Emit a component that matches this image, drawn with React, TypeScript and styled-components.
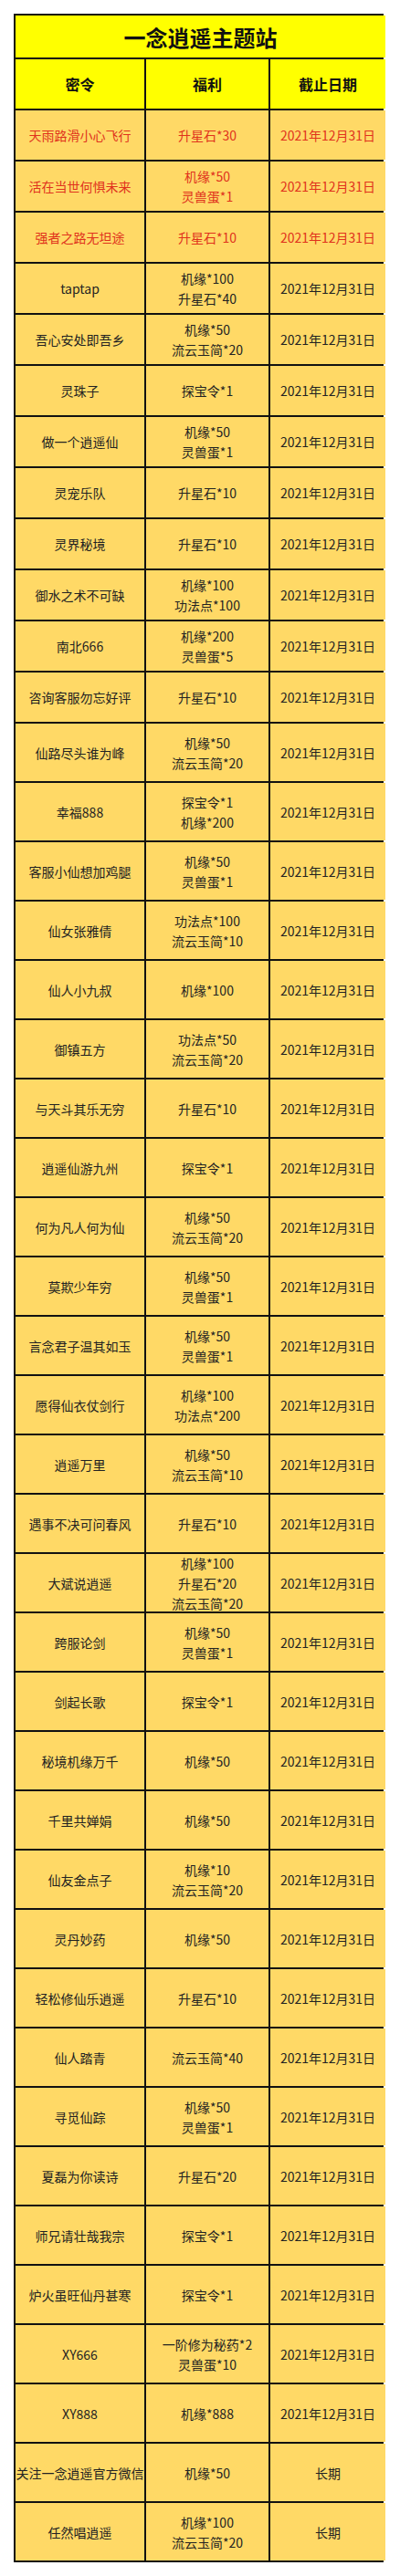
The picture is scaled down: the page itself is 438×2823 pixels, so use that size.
import { FC } from 'react';
import styled, { createGlobalStyle, css } from 'styled-components';

const GlobalStyle = createGlobalStyle`
	html, body {
		margin: 0;
		padding: 0;
		background: #fff;
	}
	body {
		font-family: 'Noto Sans CJK SC', 'Noto Sans', sans-serif;
	}
`;

interface ICode {
	code: string;
	rewards: string[];
	deadline?: string;
	red?: boolean;
}

const DATE = '2021年12月31日';

const codes: ICode[] = [
	{ code: '天雨路滑小心飞行', rewards: ['升星石*30'], red: true },
	{ code: '活在当世何惧未来', rewards: ['机缘*50', '灵兽蛋*1'], red: true },
	{ code: '强者之路无坦途', rewards: ['升星石*10'], red: true },
	{ code: 'taptap', rewards: ['机缘*100', '升星石*40'] },
	{ code: '吾心安处即吾乡', rewards: ['机缘*50', '流云玉简*20'] },
	{ code: '灵珠子', rewards: ['探宝令*1'] },
	{ code: '做一个逍遥仙', rewards: ['机缘*50', '灵兽蛋*1'] },
	{ code: '灵宠乐队', rewards: ['升星石*10'] },
	{ code: '灵界秘境', rewards: ['升星石*10'] },
	{ code: '御水之术不可缺', rewards: ['机缘*100', '功法点*100'] },
	{ code: '南北666', rewards: ['机缘*200', '灵兽蛋*5'] },
	{ code: '咨询客服勿忘好评', rewards: ['升星石*10'] },
	{ code: '仙路尽头谁为峰', rewards: ['机缘*50', '流云玉简*20'] },
	{ code: '幸福888', rewards: ['探宝令*1', '机缘*200'] },
	{ code: '客服小仙想加鸡腿', rewards: ['机缘*50', '灵兽蛋*1'] },
	{ code: '仙女张雅倩', rewards: ['功法点*100', '流云玉简*10'] },
	{ code: '仙人小九叔', rewards: ['机缘*100'] },
	{ code: '御镇五方', rewards: ['功法点*50', '流云玉简*20'] },
	{ code: '与天斗其乐无穷', rewards: ['升星石*10'] },
	{ code: '逍遥仙游九州', rewards: ['探宝令*1'] },
	{ code: '何为凡人何为仙', rewards: ['机缘*50', '流云玉简*20'] },
	{ code: '莫欺少年穷', rewards: ['机缘*50', '灵兽蛋*1'] },
	{ code: '言念君子温其如玉', rewards: ['机缘*50', '灵兽蛋*1'] },
	{ code: '愿得仙衣仗剑行', rewards: ['机缘*100', '功法点*200'] },
	{ code: '逍遥万里', rewards: ['机缘*50', '流云玉简*10'] },
	{ code: '遇事不决可问春风', rewards: ['升星石*10'] },
	{ code: '大斌说逍遥', rewards: ['机缘*100', '升星石*20', '流云玉简*20'] },
	{ code: '跨服论剑', rewards: ['机缘*50', '灵兽蛋*1'] },
	{ code: '剑起长歌', rewards: ['探宝令*1'] },
	{ code: '秘境机缘万千', rewards: ['机缘*50'] },
	{ code: '千里共婵娟', rewards: ['机缘*50'] },
	{ code: '仙友金点子', rewards: ['机缘*10', '流云玉简*20'] },
	{ code: '灵丹妙药', rewards: ['机缘*50'] },
	{ code: '轻松修仙乐逍遥', rewards: ['升星石*10'] },
	{ code: '仙人踏青', rewards: ['流云玉简*40'] },
	{ code: '寻觅仙踪', rewards: ['机缘*50', '灵兽蛋*1'] },
	{ code: '夏磊为你读诗', rewards: ['升星石*20'] },
	{ code: '师兄请壮哉我宗', rewards: ['探宝令*1'] },
	{ code: '炉火虽旺仙丹甚寒', rewards: ['探宝令*1'] },
	{ code: 'XY666', rewards: ['一阶修为秘药*2', '灵兽蛋*10'] },
	{ code: 'XY888', rewards: ['机缘*888'] },
	{ code: '关注一念逍遥官方微信', rewards: ['机缘*50'], deadline: '长期' },
	{ code: '任然唱逍遥', rewards: ['机缘*100', '流云玉简*20'], deadline: '长期' },
];

// first rows are shorter than the rest in the original sheet
const SHORT_ROWS = 12;

const Page = styled.div`
	padding: 15px 14px 15px 15px;
`;

const Table = styled.div`
	display: grid;
	grid-template-columns: 141px 134px 126px;
	gap: 2px;
	width: 401px;
	border: 2px solid #111;
	background: #111;
`;

const Title = styled.div`
	grid-column: 1 / -1;
	display: flex;
	align-items: center;
	justify-content: center;
	height: 46px;
	background: #ffff00;
	color: #111;
	font-size: 24px;
	font-weight: 700;
	letter-spacing: 0;
`;

const Head = styled.div`
	display: flex;
	align-items: center;
	justify-content: center;
	height: 54px;
	background: #ffff00;
	color: #111;
	font-size: 16px;
	font-weight: 700;
`;

interface PropsCell {
	$tall?: boolean;
	$red?: boolean;
}

const Cell = styled.div<PropsCell>`
	display: flex;
	flex-direction: column;
	align-items: center;
	justify-content: center;
	height: ${(props) => (props.$tall ? '63px' : '54px')};
	background: #ffd966;
	color: #222;
	font-size: 14px;
	line-height: 22px;
	text-align: center;
	white-space: nowrap;
	${(props) =>
		props.$red &&
		css`
			color: #e0321c;
		`}
`;

const Row: FC<{ item: ICode; tall: boolean }> = ({ item, tall }) => (
	<>
		<Cell $tall={tall} $red={item.red}>
			{item.code}
		</Cell>
		<Cell $tall={tall} $red={item.red}>
			{item.rewards.map((reward) => (
				<span key={reward}>{reward}</span>
			))}
		</Cell>
		<Cell $tall={tall} $red={item.red}>
			{item.deadline ?? DATE}
		</Cell>
	</>
);

const App: FC = () => (
	<>
		<GlobalStyle />
		<Page>
			<Table>
				<Title>一念逍遥主题站</Title>
				<Head>密令</Head>
				<Head>福利</Head>
				<Head>截止日期</Head>
				{codes.map((item, index) => (
					<Row key={item.code} item={item} tall={index >= SHORT_ROWS} />
				))}
			</Table>
		</Page>
	</>
);

export default App;
